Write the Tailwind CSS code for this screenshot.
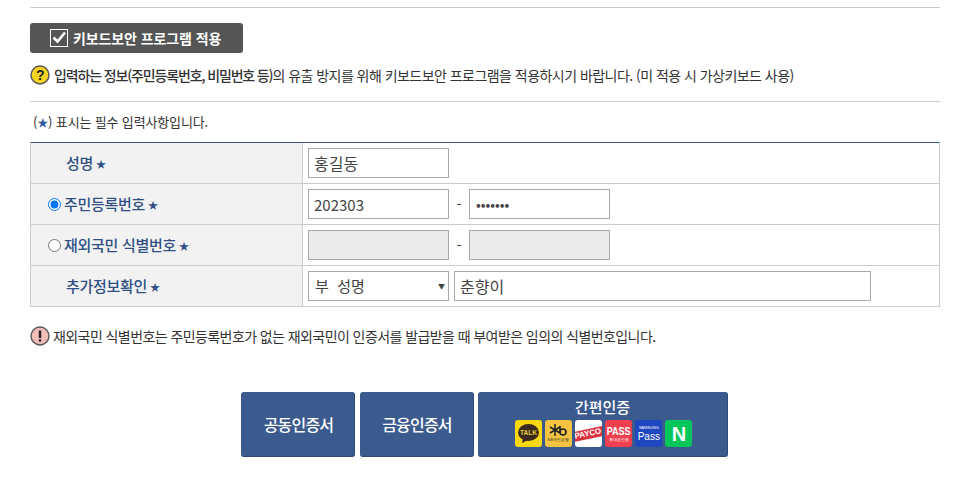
<!DOCTYPE html>
<html lang="ko">
<head>
  <meta charset="UTF-8" />
  <title>본인확인</title>
  <script src="https://cdn.jsdelivr.net/npm/@tailwindcss/browser@4"></script>
</head>
<body class="bg-white font-['Noto_Sans_CJK_KR',sans-serif] text-[#333]">
  <div class="w-[976px] h-[492px] overflow-hidden pl-[30px] pr-[36px] pt-[7px]">
    <!-- keyboard security -->
    <div class="border-t border-[#ccc] pt-[15px]">
      <button class="flex items-center w-[213px] h-[30px] pl-[20px] bg-[#555] rounded-[3px] text-white text-[14px] font-bold tracking-[-0.1px]">
        <svg class="w-[18px] h-[18px] mr-[5px]" viewBox="0 0 18 18">
          <rect x="0.5" y="0.5" width="17" height="17" fill="none" stroke="#fff" />
          <path d="M3.5 8.5 L7.5 12.5 L15 3.5" fill="none" stroke="#fff" stroke-width="2.6" />
        </svg>
        키보드보안 프로그램 적용
      </button>
      <div class="flex items-center h-[24px] mt-[10px] text-[14px] tracking-[-0.54px]">
        <svg class="w-[20px] h-[20px] mr-[4px] shrink-0" viewBox="0 0 20 20">
          <circle cx="10" cy="10" r="9" fill="#f7d21e" stroke="#555" stroke-width="1.4" />
          <text x="10" y="15" text-anchor="middle" font-size="14" font-weight="700" fill="#222" font-family="Liberation Sans">?</text>
        </svg>
        <span><b class="font-medium tracking-[-1.15px]">입력하는 정보(주민등록번호, 비밀번호 등)</b>의 유출 방지를 위해 키보드보안 프로그램을 적용하시기 바랍니다. (미 적용 시 가상키보드 사용)</span>
      </div>
    </div>

    <div class="border-t border-[#ccc] mt-[14px] pt-[10px]">
      <p class="h-[20px] pl-[3px] text-[13px] leading-[20px] tracking-[-0.15px]">(<span class="text-[11px] text-[#2d5a9b]">★</span>) 표시는 필수 입력사항입니다.</p>
    </div>

    <!-- form table -->
    <div class="mt-[10px] border-t border-[#3a5a8c] border-l border-l-[#ccc] border-r border-r-[#ccc] text-[15px]">
      <div class="flex h-[41px] border-b border-[#ccc]">
        <div class="flex items-center w-[272px] pl-[35px] bg-[#f2f2f2] border-r border-[#ccc] font-medium text-[#2f4f86] tracking-[-0.3px]">성명<span class="ml-[3px] text-[10px]">★</span></div>
        <div class="flex items-center pl-[5px]">
          <input value="홍길동" class="w-[141px] h-[30px] px-[5px] border border-[#aaa] text-[16px] text-[#444] outline-none" />
        </div>
      </div>
      <div class="flex h-[41px] border-b border-[#ccc]">
        <div class="flex items-center w-[272px] pl-[17px] bg-[#f2f2f2] border-r border-[#ccc] font-medium text-[#2f4f86] tracking-[-0.3px]">
          <input type="radio" name="idtype" checked class="w-[13px] h-[13px] mr-[3px] accent-[#0075ff]" />주민등록번호<span class="ml-[3px] text-[10px]">★</span>
        </div>
        <div class="flex items-center pl-[5px]">
          <input value="202303" class="w-[141px] h-[30px] px-[5px] border border-[#aaa] text-[15px] text-[#444] outline-none" />
          <span class="w-[20px] text-center text-[#444]">-</span>
          <input type="password" value="1234567" class="w-[141px] h-[30px] px-[6px] border border-[#aaa] text-[14px] text-[#444] outline-none" />
        </div>
      </div>
      <div class="flex h-[41px] border-b border-[#ccc]">
        <div class="flex items-center w-[272px] pl-[17px] bg-[#f2f2f2] border-r border-[#ccc] font-medium text-[#2f4f86] tracking-[-0.3px]">
          <input type="radio" name="idtype" class="w-[13px] h-[13px] mr-[3px]" />재외국민 식별번호<span class="ml-[3px] text-[10px]">★</span>
        </div>
        <div class="flex items-center pl-[5px]">
          <input disabled class="w-[141px] h-[30px] border border-[#aaa] bg-[#ebebeb]" />
          <span class="w-[20px] text-center text-[#444]">-</span>
          <input disabled class="w-[141px] h-[30px] border border-[#aaa] bg-[#ebebeb]" />
        </div>
      </div>
      <div class="flex h-[41px] border-b border-[#ccc]">
        <div class="flex items-center w-[272px] pl-[35px] bg-[#f2f2f2] border-r border-[#ccc] font-medium text-[#2f4f86] tracking-[-0.3px]">추가정보확인<span class="ml-[3px] text-[10px]">★</span></div>
        <div class="flex items-center pl-[5px]">
          <div class="flex items-center justify-between w-[141px] h-[30px] pl-[6px] pr-[3px] border border-[#aaa] text-[#444]">
            <span class="text-[15px]">부 &nbsp;성명</span>
            <span class="text-[7px]">▼</span>
          </div>
          <input value="춘향이" class="w-[417px] h-[30px] ml-[5px] px-[5px] border border-[#aaa] text-[16px] text-[#444] outline-none" />
        </div>
      </div>
    </div>

    <!-- notice -->
    <div class="flex items-center h-[24px] mt-[17px] text-[14px] tracking-[-0.58px]">
      <svg class="w-[20px] h-[20px] mr-[3px] shrink-0" viewBox="0 0 20 20">
        <circle cx="10" cy="10" r="9" fill="#f5bcbc" stroke="#555" stroke-width="1.4" />
        <rect x="8.8" y="4.5" width="2.4" height="7.5" fill="#222" />
        <rect x="8.8" y="13.2" width="2.4" height="2.4" fill="#222" />
      </svg>
      <span>재외국민 식별번호는 주민등록번호가 없는 재외국민이 인증서를 발급받을 때 부여받은 임의의 식별번호입니다.</span>
    </div>

    <!-- certificate buttons -->
    <div class="flex ml-[211px] mt-[44px] gap-[5px] text-white font-medium text-[16px] tracking-[-0.8px]">
      <button class="w-[114px] h-[65px] pl-[2px] bg-[#3b5a8e] rounded-[3px] border-b border-r border-[#2e4a78]">공동인증서</button>
      <button class="w-[114px] h-[65px] pl-[1px] bg-[#3b5a8e] rounded-[3px] border-b border-r border-[#2e4a78]">금융인증서</button>
      <button class="flex flex-col items-center w-[250px] h-[65px] ml-[-1px] pt-[4px] bg-[#3b5a8e] rounded-[3px] border-b border-r border-[#2e4a78]">
        <span class="h-[22px] leading-[22px] text-[15px] tracking-normal">간편인증</span>
        <span class="flex gap-[3.2px] ml-[2px] mt-[2px] font-['Liberation_Sans',sans-serif] font-bold tracking-normal">
          <span class="flex items-center justify-center w-[27px] h-[27px] rounded-[3px] bg-[#fbd80f]">
            <svg class="w-[23px] h-[21px]" viewBox="0 0 23 21">
              <ellipse cx="11.5" cy="9.5" rx="10.5" ry="8.5" fill="#3b2a1d" />
              <path d="M6 15 L5 20 L11 17 Z" fill="#3b2a1d" />
              <text x="11.5" y="12" text-anchor="middle" font-size="6.5" font-weight="700" fill="#e8cf3a">TALK</text>
            </svg>
          </span>
          <span class="flex flex-col items-center justify-center w-[27px] h-[27px] rounded-[3px] bg-[#f3c440] text-[#222]">
            <svg class="w-[19px] h-[13px]" viewBox="0 0 19 13">
              <path d="M6 0 V12 M1 3 L11 9 M11 3 L1 9" stroke="#222" stroke-width="1.5" fill="none" />
              <circle cx="14" cy="8" r="3" fill="none" stroke="#222" stroke-width="1.6" />
              <path d="M11 2 V8" stroke="#222" stroke-width="1.6" />
            </svg>
            <span class="text-[4px] leading-[6px] font-normal">KB국민은행</span>
          </span>
          <span class="flex items-center justify-center w-[27px] h-[27px] overflow-hidden rounded-[3px] bg-white">
            <span class="-rotate-12 shrink-0 w-[32px] bg-[#d9323f] text-white text-[8px] leading-[10px] text-center">PAYCO</span>
          </span>
          <span class="flex flex-col items-center justify-center w-[27px] h-[27px] rounded-[3px] bg-[#f0404f]">
            <span class="scale-y-125 text-[9px] leading-[12px]">PASS</span>
            <span class="text-[4px] leading-[6px] font-normal">휴대폰인증</span>
          </span>
          <span class="flex flex-col items-center justify-center w-[27px] h-[27px] rounded-[3px] bg-[#1f47c0]">
            <span class="text-[4px] leading-[6px] font-normal">SAMSUNG</span>
            <span class="text-[10px] leading-[11px] font-normal">Pass</span>
          </span>
          <span class="flex items-center justify-center w-[27px] h-[27px] rounded-[3px] bg-[#03c75a] text-[20px]">N</span>
        </span>
      </button>
    </div>
  </div>
</body>
</html>
